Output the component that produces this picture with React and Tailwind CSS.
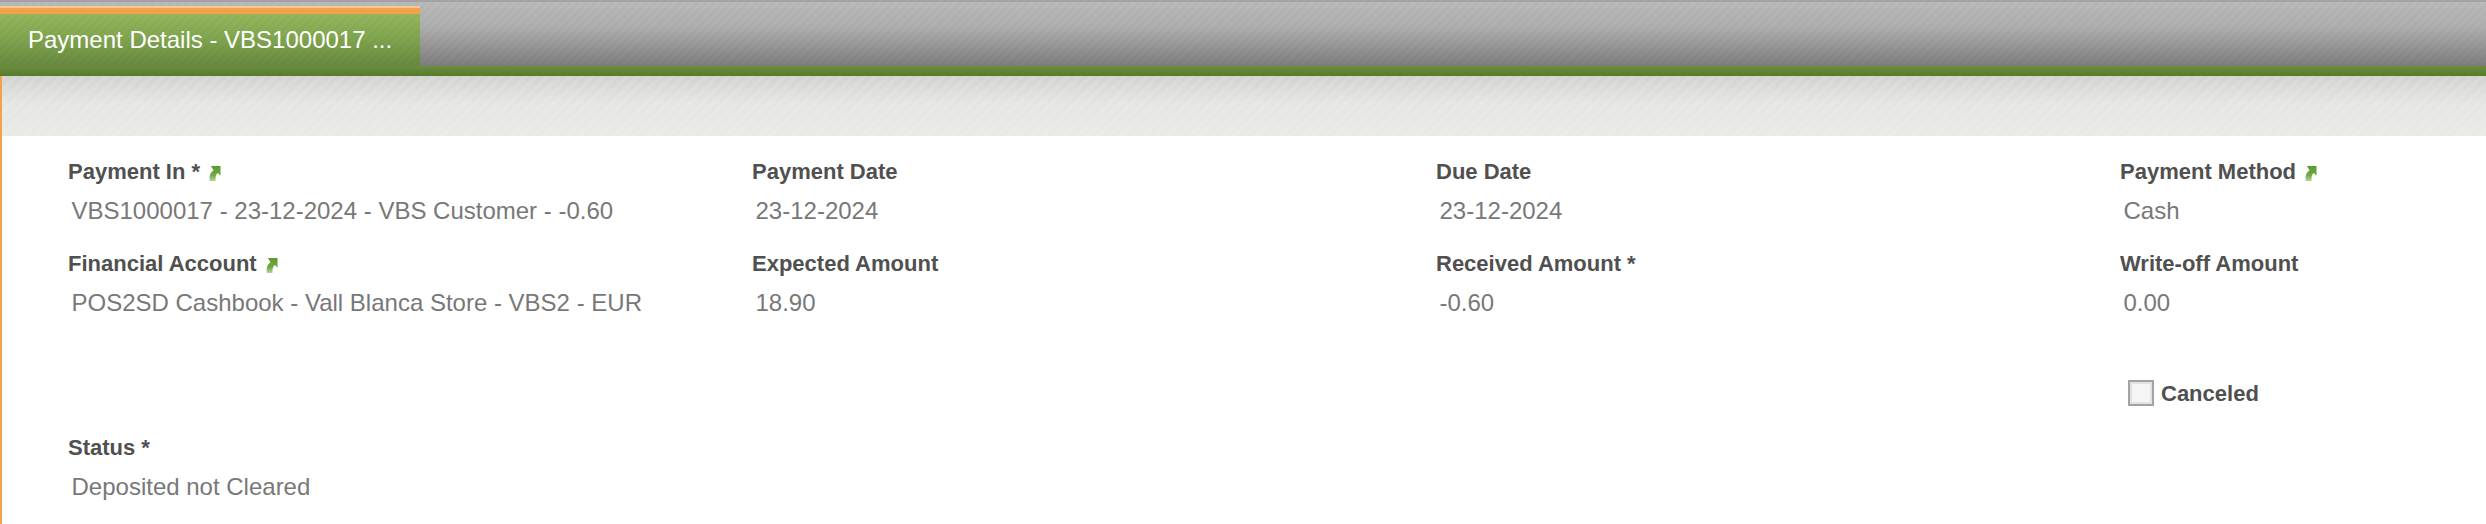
import React from 'react';

const LinkArrow = () => (
  <svg width="13" height="17" viewBox="0 0 14 18" className="ml-[8px] mt-[3px] shrink-0 blur-[0.5px]">
    <defs>
      <linearGradient id="arrowFade" x1="0" y1="0" x2="0" y2="1">
        <stop offset="0" stopColor="#5f9a30" />
        <stop offset="0.6" stopColor="#6fa844" />
        <stop offset="1" stopColor="#b5d39c" />
      </linearGradient>
    </defs>
    <path d="M3 1 L13.5 1 L13.5 11.5 L10.5 8.5 C8.5 10 8 12.5 8 17 L2 17 C1 11 3 7.5 6 5.5 Z" fill="url(#arrowFade)" />
  </svg>
);

const Field = ({ label, value, link }) => (
  <div className="flex flex-col">
    <div className="flex items-center h-[24px] mt-[1px] text-[22px] font-bold text-[#505050] leading-none whitespace-nowrap">
      <span>{label}</span>
      {link && <LinkArrow />}
    </div>
    <div className="mt-[15px] pl-[3.5px] h-[24px] text-[24px] text-[#787878] leading-[24px] whitespace-nowrap">{value}</div>
  </div>
);

export default function App() {
  return (
    <div className="w-[2486px] h-[524px] overflow-hidden bg-white font-['Liberation_Sans',Arial,sans-serif]">
      {/* tab bar */}
      <div className="h-[66px] pt-[4px] border-t-2 border-[#a3a3a3] bg-[image:repeating-linear-gradient(135deg,rgba(0,0,0,0.018)_0,rgba(0,0,0,0.018)_3px,transparent_3px,transparent_6px),linear-gradient(to_bottom,#bababa,#aeaeae_40%,#7d7d7d)]">
        <div className="w-[420px] h-[60px] flex flex-col">
          <div className="h-[8px] bg-[#f3a14b] border-t-2 border-[#f8c994]" />
          <div className="flex-1 flex items-center pl-[28px] text-[24px] text-white bg-[image:repeating-linear-gradient(135deg,rgba(0,0,0,0.018)_0,rgba(0,0,0,0.018)_3px,transparent_3px,transparent_6px),linear-gradient(to_bottom,#94b65d,#84a851_40%,#66893f)]">
            Payment Details - VBS1000017 ...
          </div>
        </div>
      </div>
      <div className="h-[10px] bg-gradient-to-b from-[#6a8e3d] to-[#567b2b]" />
      <div className="h-[448px] border-l-2 border-[#f3a14b]">
        {/* toolbar */}
        <div className="h-[60px] bg-[image:repeating-linear-gradient(135deg,rgba(255,255,255,0.1)_0,rgba(255,255,255,0.1)_4px,transparent_4px,transparent_8px),linear-gradient(to_bottom,#d2d3d0,#e5e6e2_45%,#e9eae5)]" />
        <div className="pl-[66px] pt-[23px] grid grid-cols-[684px_684px_684px_300px] grid-rows-[92px_92px_112px_auto]">
          <Field label="Payment In *" value="VBS1000017 - 23-12-2024 - VBS Customer - -0.60" link />
          <Field label="Payment Date" value="23-12-2024" />
          <Field label="Due Date" value="23-12-2024" />
          <Field label="Payment Method" value="Cash" link />
          <Field label="Financial Account" value="POS2SD Cashbook - Vall Blanca Store - VBS2 - EUR" link />
          <Field label="Expected Amount" value="18.90" />
          <Field label="Received Amount *" value="-0.60" />
          <Field label="Write-off Amount" value="0.00" />
          <div className="col-start-4 flex items-center h-[26px] mt-[37px] pl-[8px]">
            <span className="w-[26px] h-[26px] border-2 border-[#a3a3a3] bg-[#f5f5f5] shadow-[inset_0_0_0_2px_#e2e2e2]" />
            <span className="ml-[7px] text-[22px] font-bold text-[#505050]">Canceled</span>
          </div>
          <div className="col-start-1 -mt-[20px]">
            <Field label="Status *" value="Deposited not Cleared" />
          </div>
        </div>
      </div>
    </div>
  );
}
